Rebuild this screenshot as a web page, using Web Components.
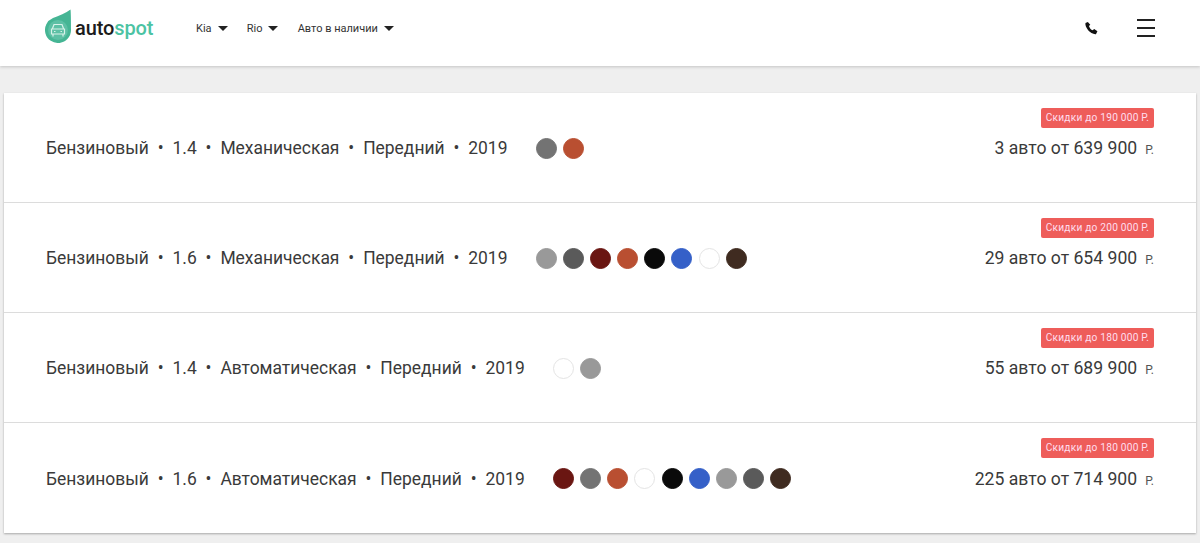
<!DOCTYPE html>
<html lang="ru">
<head>
<meta charset="utf-8">
<title>Autospot</title>
<style>
	html, body { margin: 0; padding: 0; background: #efefef; }
	body { font-family: Roboto, "Liberation Sans", sans-serif; height: 543px; overflow: hidden; }
</style>
</head>
<body>
<site-header></site-header>
<offer-list>
	<offer-row specs="Бензиновый|1.4|Механическая|Передний|2019" colors="#737373,#b94f31" sale="Скидки до 190 000 Р." count="3 авто от 639 900"></offer-row>
	<offer-row specs="Бензиновый|1.6|Механическая|Передний|2019" colors="#999999,#5a5a5a,#6a1612,#b94f31,#0a0a0a,#3560c8,#ffffff,#3f2b20" sale="Скидки до 200 000 Р." count="29 авто от 654 900"></offer-row>
	<offer-row specs="Бензиновый|1.4|Автоматическая|Передний|2019" colors="#ffffff,#999999" sale="Скидки до 180 000 Р." count="55 авто от 689 900"></offer-row>
	<offer-row specs="Бензиновый|1.6|Автоматическая|Передний|2019" colors="#6a1612,#737373,#b94f31,#ffffff,#0a0a0a,#3560c8,#999999,#5a5a5a,#3f2b20" sale="Скидки до 180 000 Р." count="225 авто от 714 900"></offer-row>
</offer-list>

<script>
class NavLink extends HTMLElement {
	constructor() {
		super();
		this.attachShadow({mode: 'open'});
		this.shadowRoot.innerHTML = `
			<style>
				:host { display: flex; align-items: center; gap: 6px; font-size: 11px; color: #333; }
				i { width: 0; height: 0; border-style: solid; border-width: 5px 5px 0 5px; border-color: #222 transparent transparent; margin-top: 1px; }
			</style>
			<slot></slot><i></i>
		`;
	}
}

class SiteHeader extends HTMLElement {
	constructor() {
		super();
		this.attachShadow({mode: 'open'});
		this.shadowRoot.innerHTML = `
			<style>
				:host { display: flex; align-items: center; height: 66px; background: #fff; box-shadow: 0 1px 3px rgba(0,0,0,.18); box-sizing: border-box; padding: 0 45px 10px 45px; position: relative; }
				.logo { display: flex; align-items: center; gap: 4px; width: 151px; }
				.logo svg { margin-top: -5px; }
				.logo span { font: 500 20px/24px Roboto, sans-serif; color: #1c1c1c; letter-spacing: -.1px; }
				.logo b { font-weight: 500; color: #4cc3a3; }
				nav { display: flex; gap: 19.200px; }
				.right { margin-left: auto; display: flex; align-items: center; gap: 39px; }
				svg { display: block; }
			</style>
			<div class="logo">
				<svg width="26" height="34" viewBox="0 0 26 34">
					<path d="M25.500 .5 C26 4 26 14 26 21 A13 13 0 1 1 8 9 C14 7 21 4 25.500 .5 Z" fill="#45b594"/>
					<circle cx="13" cy="21" r="10" fill="#5dc0a5"/>
					<path d="M7.500 19.500 L9 15.500 H17 L18.500 19.500 M6.500 20 H19.500 V25 H6.500 Z M8 25 V27.500 M18 25 V27.500 M9 22.500 H10.500 M15.500 22.500 H17" fill="none" stroke="#d9f2ea" stroke-width="1.200"/>
				</svg>
				<span>auto<b>spot</b></span>
			</div>
			<nav>
				<nav-link>Kia</nav-link>
				<nav-link>Rio</nav-link>
				<nav-link>Авто в наличии</nav-link>
			</nav>
			<div class="right">
				<svg width="14" height="14" viewBox="0 0 24 24"><path d="M6.600 1.500 L2.500 3.500 C1 11 11.500 23.500 20.500 22.500 L23 17.500 L17.500 13.500 L14.800 16 C12 15 9.300 11.500 8.500 8.500 L10.800 6.500 Z" fill="#111"/></svg>
				<svg width="18" height="18" viewBox="0 0 18 18"><path d="M0 1 H18 M0 9 H18 M0 17 H18" stroke="#222" stroke-width="2"/></svg>
			</div>
		`;
	}
}

class ColorDot extends HTMLElement {
	static get observedAttributes() {
		return ['color'];
	}

	constructor() {
		super();
		this.attachShadow({mode: 'open'});
	}

	connectedCallback() {
		this.render();
	}

	attributeChangedCallback(property, oldValue, newValue) {
		if (oldValue === newValue) return;
		this.render();
	}

	render() {
		const color = this.getAttribute('color') || '#fff';
		const border = color === '#ffffff' ? '#e4e4e4' : color;
		this.shadowRoot.innerHTML = `
			<style>
				:host { display: block; width: 21px; height: 21px; box-sizing: border-box; border-radius: 50%; background: ${color}; border: 1px solid ${border}; }
			</style>
		`;
	}
}

class OfferRow extends HTMLElement {
	constructor() {
		super();
		this.attachShadow({mode: 'open'});
	}

	connectedCallback() {
		const specs = this.getAttribute('specs').split('|');
		const colors = this.getAttribute('colors').split(',');
		this.shadowRoot.innerHTML = `
			<style>
				:host { display: flex; align-items: center; height: 110px; box-sizing: border-box; padding: 1px 42px 0; border-bottom: 1px solid #dcdcdc; position: relative; color: #3a3a3a; font-size: 17.450px; }
				:host(:last-child) { border-bottom: 0; }
				.specs { display: flex; align-items: center; }
				.sep { width: 23.700px; text-align: center; }
				.colors { display: flex; gap: 6.100px; margin-left: 28.500px; }
				.count { margin-left: auto; display: flex; align-items: baseline; font-size: 17.600px; }
				.cur { font-size: 12px; margin-left: 8px; color: #555; }
				.sale { position: absolute; top: 15px; right: 42px; height: 20px; line-height: 20px; width: 113px; text-align: center; border-radius: 2px; background: #ee5d5a; color: #fde; font-size: 10.200px; letter-spacing: .2px; }
			</style>
			<div class="specs">
				${specs.map(s => `<span>${s}</span>`).join('<span class="sep">•</span>')}
			</div>
			<div class="colors">
				${colors.map(c => `<color-dot color="${c}"></color-dot>`).join('')}
			</div>
			<div class="count"><span>${this.getAttribute('count')}</span><span class="cur">Р.</span></div>
			<div class="sale">${this.getAttribute('sale')}</div>
		`;
	}
}

class OfferList extends HTMLElement {
	constructor() {
		super();
		this.attachShadow({mode: 'open'});
		this.shadowRoot.innerHTML = `
			<style>
				:host { display: block; margin: 27px 4px 0; background: #fff; box-shadow: 0 1px 2px rgba(0,0,0,.3); }
			</style>
			<slot></slot>
		`;
	}
}

customElements.define('nav-link', NavLink);
customElements.define('site-header', SiteHeader);
customElements.define('color-dot', ColorDot);
customElements.define('offer-row', OfferRow);
customElements.define('offer-list', OfferList);
</script>
</body>
</html>
